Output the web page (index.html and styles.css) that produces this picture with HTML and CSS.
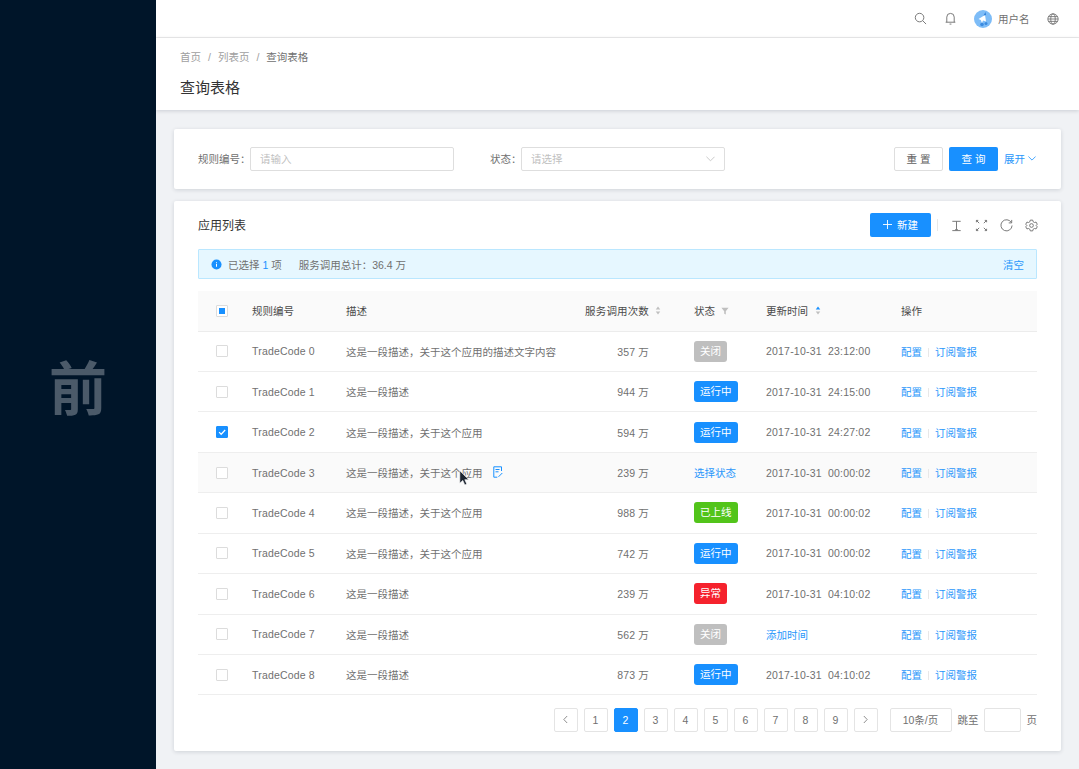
FILE: index.html
```html
<!DOCTYPE html>
<html lang="zh-CN">
<head>
<meta charset="utf-8">
<title>查询表格</title>
<link rel="stylesheet" href="styles.css">
</head>
<body>
<div class="app">
  <aside class="sidebar"><span class="side-char">前</span></aside>
  <div class="main">
    <header class="topbar">
      <svg class="ico top-search" viewBox="0 0 14 14"><circle cx="6" cy="6" r="4.6"/><path d="M9.4 9.4 13 13"/></svg>
      <svg class="ico top-bell" viewBox="0 0 14 14"><path d="M3 11V5.500a4 4 0 0 1 8 0V11M1.800 11h10.400M6 13h2"/></svg>
      <span class="avatar"><svg viewBox="0 0 18 18"><circle cx="9" cy="9" r="9" fill="#7dbcf7"/><path d="M4.500 9l6.500-4 1 6.500-3-1-1 2.500-1.200-3z" fill="#fff"/><path d="M11.500 2 9.500 5.500 12 5z" fill="#2f7fd8"/><circle cx="8" cy="14.500" r="1.800" fill="#3b8be0"/><circle cx="12" cy="13.500" r="1.500" fill="#3b8be0"/></svg></span>
      <span class="user">用户名</span>
      <svg class="ico top-globe" viewBox="0 0 14 14"><circle cx="7" cy="7" r="6"/><ellipse cx="7" cy="7" rx="2.600" ry="6"/><path d="M1 7h12M1.800 4.200h10.400M1.800 9.800h10.400"/></svg>
    </header>

    <section class="pagehead">
      <nav class="crumbs"><span>首页</span><i>/</i><span>列表页</span><i>/</i><span class="crumb-now">查询表格</span></nav>
      <h1 class="title">查询表格</h1>
    </section>

    <div class="content">
      <section class="card filter">
        <label class="f-label">规则编号：</label>
        <div class="field field-a">请输入</div>
        <label class="f-label f-label-b">状态：</label>
        <div class="field field-b">请选择
          <svg class="chev" viewBox="0 0 10 6"><path d="M.5.5 5 5 9.500.5"/></svg>
        </div>
        <span class="btn btn-ghost btn-reset">重 置</span>
        <span class="btn btn-primary btn-query">查 询</span>
        <span class="expand">展开<svg class="chev-blue" viewBox="0 0 10 6"><path d="M.5.5 5 5 9.500.5"/></svg></span>
      </section>

      <section class="card listing">
        <div class="toolbar">
          <h2 class="list-title">应用列表</h2>
          <span class="btn btn-primary btn-new"><svg class="plus" viewBox="0 0 10 10"><path d="M5 0v10M0 5h10"/></svg>新建</span>
          <span class="tool-div"></span>
          <svg class="ico tool" viewBox="0 0 14 14"><path d="M2.500 2.500h9M7 2.500v9M2.500 12.500h9M5.500 11.500h3"/></svg>
          <svg class="ico tool" viewBox="0 0 14 14"><path d="M1.500 1.500l3 3M12.500 1.500l-3 3M1.500 12.500l3-3M12.500 12.500l-3-3M1.500 1.500h2M1.500 1.500v2M12.500 1.500h-2M12.500 1.500v2M1.500 12.500h2M1.500 12.500v-2M12.500 12.500h-2M12.500 12.500v-2"/></svg>
          <svg class="ico tool" viewBox="0 0 14 14"><path d="M12.200 3.800A6 6 0 1 0 13 7M12.600 1v3.200H9.400"/></svg>
          <svg class="ico tool" viewBox="0 0 14 14"><path d="M5.700 1.200h2.600l.4 1.700 1.500.9 1.700-.5 1.300 2.300L12 7l1.200 1.400-1.300 2.300-1.700-.5-1.500.9-.4 1.700H5.700l-.4-1.700-1.500-.9-1.700.5L.8 8.400 2 7 .8 5.600l1.300-2.300 1.700.5 1.500-.9z"/><circle cx="7" cy="7" r="2"/></svg>
        </div>

        <div class="alert">
          <svg class="info" viewBox="0 0 12 12"><circle cx="6" cy="6" r="5.500" fill="#1890ff"/><path d="M6 5.200v3.300M6 3.200v1" stroke="#fff" stroke-width="1.100"/></svg>
          <span>已选择 <b class="alert-num">1</b> 项</span>
          <span class="alert-sum">服务调用总计：36.4 万</span>
          <a class="link alert-clear">清空</a>
        </div>

        <div class="table">
          <div class="row head">
            <div><span class="cb cb-part"></span></div>
            <div>规则编号</div>
            <div>描述</div>
            <div class="num">服务调用次数</div>
            <div><svg class="sort" viewBox="0 0 6 10"><path d="M3 .5 5.500 4H.5z" fill="#bfbfbf"/><path d="M3 9.500.5 6h5z" fill="#bfbfbf"/></svg></div>
            <div class="status-head">状态<svg class="filter-ico" viewBox="0 0 10 10"><path d="M.5 1h9L6 5.200V9.500L4 8.500V5.200z" fill="#bfbfbf"/></svg></div>
            <div class="status-head">更新时间<svg class="sort sort-time" viewBox="0 0 6 10"><path d="M3 .5 5.500 4H.5z" fill="#1890ff"/><path d="M3 9.500.5 6h5z" fill="#bfbfbf"/></svg></div>
            <div>操作</div>
          </div>

          <div class="row">
            <div><span class="cb"></span></div><div class="code">TradeCode 0</div><div>这是一段描述，关于这个应用的描述文字内容</div><div class="num">357 万</div><div></div>
            <div><span class="tag tag-gray">关闭</span></div><div class="time">2017-10-31  23:12:00</div>
            <div><a class="link">配置</a><i class="sep"></i><a class="link">订阅警报</a></div>
          </div>
          <div class="row">
            <div><span class="cb"></span></div><div class="code">TradeCode 1</div><div>这是一段描述</div><div class="num">944 万</div><div></div>
            <div><span class="tag tag-blue">运行中</span></div><div class="time">2017-10-31  24:15:00</div>
            <div><a class="link">配置</a><i class="sep"></i><a class="link">订阅警报</a></div>
          </div>
          <div class="row">
            <div><span class="cb cb-on"><svg viewBox="0 0 12 12"><path d="M2.500 6.200 5 8.700 9.800 3.600"/></svg></span></div><div class="code">TradeCode 2</div><div>这是一段描述，关于这个应用</div><div class="num">594 万</div><div></div>
            <div><span class="tag tag-blue">运行中</span></div><div class="time">2017-10-31  24:27:02</div>
            <div><a class="link">配置</a><i class="sep"></i><a class="link">订阅警报</a></div>
          </div>
          <div class="row row-hover">
            <div><span class="cb"></span></div><div class="code">TradeCode 3</div>
            <div class="desc-edit">这是一段描述，关于这个应用
              <svg class="edit" viewBox="0 0 10 12"><path d="M8.500 5V.8H.8v10.400h3.500M2.500 3.500h4M2.500 5.800h3M5.500 10.800 9.300 7"/></svg>
              <svg class="cursor" viewBox="0 0 11 16"><path d="M.8.8v12.400l3-2.800 2 4.600 2-.9-2-4.400h4z" fill="#1c2430" stroke="#fff" stroke-width=".6"/></svg>
            </div>
            <div class="num">239 万</div><div></div>
            <div><a class="link">选择状态</a></div><div class="time">2017-10-31  00:00:02</div>
            <div><a class="link">配置</a><i class="sep"></i><a class="link">订阅警报</a></div>
          </div>
          <div class="row">
            <div><span class="cb"></span></div><div class="code">TradeCode 4</div><div>这是一段描述，关于这个应用</div><div class="num">988 万</div><div></div>
            <div><span class="tag tag-green">已上线</span></div><div class="time">2017-10-31  00:00:02</div>
            <div><a class="link">配置</a><i class="sep"></i><a class="link">订阅警报</a></div>
          </div>
          <div class="row">
            <div><span class="cb"></span></div><div class="code">TradeCode 5</div><div>这是一段描述，关于这个应用</div><div class="num">742 万</div><div></div>
            <div><span class="tag tag-blue">运行中</span></div><div class="time">2017-10-31  00:00:02</div>
            <div><a class="link">配置</a><i class="sep"></i><a class="link">订阅警报</a></div>
          </div>
          <div class="row">
            <div><span class="cb"></span></div><div class="code">TradeCode 6</div><div>这是一段描述</div><div class="num">239 万</div><div></div>
            <div><span class="tag tag-red">异常</span></div><div class="time">2017-10-31  04:10:02</div>
            <div><a class="link">配置</a><i class="sep"></i><a class="link">订阅警报</a></div>
          </div>
          <div class="row">
            <div><span class="cb"></span></div><div class="code">TradeCode 7</div><div>这是一段描述</div><div class="num">562 万</div><div></div>
            <div><span class="tag tag-gray">关闭</span></div><div><a class="link">添加时间</a></div>
            <div><a class="link">配置</a><i class="sep"></i><a class="link">订阅警报</a></div>
          </div>
          <div class="row">
            <div><span class="cb"></span></div><div class="code">TradeCode 8</div><div>这是一段描述</div><div class="num">873 万</div><div></div>
            <div><span class="tag tag-blue">运行中</span></div><div class="time">2017-10-31  04:10:02</div>
            <div><a class="link">配置</a><i class="sep"></i><a class="link">订阅警报</a></div>
          </div>
        </div>

        <div class="pager">
          <span class="pg"><svg class="pg-arrow" viewBox="0 0 6 10"><path d="M5 .8 1 5l4 4.200"/></svg></span>
          <span class="pg">1</span>
          <span class="pg pg-on">2</span>
          <span class="pg">3</span>
          <span class="pg">4</span>
          <span class="pg">5</span>
          <span class="pg">6</span>
          <span class="pg">7</span>
          <span class="pg">8</span>
          <span class="pg">9</span>
          <span class="pg"><svg class="pg-arrow" viewBox="0 0 6 10"><path d="M1 .8 5 5l-4 4.200"/></svg></span>
          <span class="pg pg-size">10条/页</span>
          <span class="pg-text pg-text-jump">跳至</span>
          <span class="pg pg-jump"></span>
          <span class="pg-text">页</span>
        </div>
      </section>
    </div>
  </div>
</div>
</body>
</html>
```

FILE: styles.css
```css
* { box-sizing: border-box; }
html, body { margin: 0; height: 100%; overflow: hidden; }
body {
  font-family: "Liberation Sans", "Noto Sans CJK SC", sans-serif;
  font-size: 10.5px;
  color: #707070;
  background: #f0f2f5;
}
.app { display: flex; height: 769px; }
.sidebar {
  flex: 0 0 156px;
  background: #001529;
  display: flex;
  align-items: center;
  justify-content: center;
  padding-top: 1px;
}
.side-char {
  font-family: "Noto Sans CJK SC", sans-serif;
  font-size: 58px;
  font-weight: 700;
  color: #4b5a69;
  line-height: 1;
}
.main { flex: 1; min-width: 0; display: flex; flex-direction: column; }

.topbar {
  height: 38px;
  background: #fff;
  border-bottom: 1px solid #ececec;
  display: flex;
  align-items: center;
  padding-right: 20px;
  justify-content: flex-end;
  flex: none;
}
.ico { fill: none; stroke: #707070; stroke-width: 1; width: 13px; height: 13px; display: block; }
.top-search { margin-right: 17px; }
.top-bell { margin-right: 17px; }
.avatar { width: 18px; height: 18px; margin-right: 6px; }
.avatar svg { width: 18px; height: 18px; display: block; }
.user { width: 32px; margin-right: 17px; white-space: nowrap; }
.top-globe { width: 12px; height: 12px; }

.pagehead {
  height: 72px;
  background: #fff;
  padding: 12px 24px 0;
  box-shadow: 0 1px 4px rgba(0, 21, 41, .16);
  flex: none;
  position: relative;
}
.crumbs { display: flex; color: #a0a0a0; line-height: 14px; }
.crumbs i { font-style: normal; margin: 0 7px; }
.crumb-now { color: #707070; }
.title { margin: 14px 0 0; font-size: 15px; font-weight: 400; line-height: 20px; color: #333; }

.content { flex: 1; padding: 19px 18px 0; min-height: 0; }
.card { background: #fff; box-shadow: 0 1px 4px rgba(0, 21, 41, .14); border-radius: 2px; }

.filter {
  height: 60px;
  padding: 0 24px;
  display: flex;
  align-items: center;
  margin-bottom: 12px;
}
.f-label { white-space: nowrap; width: 52px; padding-bottom: 2px; }
.f-label-b { width: 31px; margin-left: 36px; }
.field {
  height: 24px;
  width: 204px;
  border: 1px solid #dedede;
  border-radius: 2px;
  color: #bfbfbf;
  display: flex;
  align-items: center;
  justify-content: space-between;
  padding: 0 9px 1px;
}
.chev { width: 9px; height: 6px; fill: none; stroke: #c4c4c4; stroke-width: 1; }
.btn {
  height: 24px;
  display: flex;
  align-items: center;
  justify-content: center;
  border-radius: 2px;
  white-space: pre;
  padding-bottom: 1px;
}
.btn-ghost { border: 1px solid #dedede; color: #606060; width: 49px; margin-left: 169px; }
.btn-primary { background: #1890ff; color: #fff; }
.btn-query { width: 49px; margin-left: 6px; }
.expand { color: #2a97fb; margin-left: 6px; display: flex; align-items: center; white-space: nowrap; padding-bottom: 1px; }
.chev-blue { width: 8px; height: 5px; margin-left: 3px; fill: none; stroke: #1890ff; stroke-width: 1; }

.listing { height: 550px; padding: 12px 24px 0; }
.toolbar { display: flex; align-items: center; height: 24px; }
.list-title { margin: 0; flex: 1; font-size: 12px; font-weight: 400; color: #333; padding-bottom: 1px; }
.btn-new { width: 61px; }
.plus { width: 9px; height: 9px; margin-right: 5px; stroke: #fff; stroke-width: 1; fill: none; }
.tool-div { width: 1px; height: 12px; background: #e8e8e8; margin: 0 12px 0 6px; }
.tool { width: 13px; height: 13px; margin-right: 12px; }
.tool:last-child { margin-right: -1px; }

.alert {
  height: 30px;
  margin-top: 12px;
  background: #e6f7ff;
  border: 1px solid #bae7ff;
  border-radius: 1px;
  display: flex;
  align-items: center;
  padding: 0 12px;
}
.info { width: 11px; height: 11px; margin-right: 6px; flex: none; }
.alert-num { font-weight: 400; color: #1890ff; }
.alert-sum { margin-left: 17px; }
.alert-clear { margin-left: auto; }
.link { color: #2a97fb; }

.table { margin-top: 12px; }
.row {
  display: grid;
  grid-template-columns: 54px 94px 224px 79px 45px 72px 135px 136px;
  height: 40.44px;
  align-items: center;
  border-bottom: 1px solid #eee;
  background: #fff;
}
.row > div:first-child { padding-left: 18px; display: flex; }
.head { height: 40.5px; background: #fafafa; color: #4a4a4a; border-bottom: 1px solid #ececec; }
.row-hover { background: #fafafa; }
.num { text-align: right; white-space: nowrap; letter-spacing: .15px; }
.code { letter-spacing: .18px; white-space: nowrap; }
.time { white-space: pre; letter-spacing: .2px; }
.desc-edit { position: relative; white-space: nowrap; }
.status-head { display: flex; align-items: center; white-space: nowrap; }
.sort { width: 6px; height: 9px; display: block; margin-left: 6px; }
.sort-time { margin-left: 7px; }
.filter-ico { width: 8px; height: 8px; margin-left: 6px; }
.edit { position: absolute; left: 147px; top: 1px; width: 10px; height: 12px; fill: none; stroke: #1890ff; stroke-width: 1; }
.cursor { position: absolute; left: 113px; top: 5px; width: 11px; height: 16px; }

.cb {
  width: 12px;
  height: 12px;
  border: 1px solid #dcdcdc;
  border-radius: 1px;
  background: #fff;
  display: flex;
  align-items: center;
  justify-content: center;
}
.cb-part::after { content: ""; width: 6px; height: 6px; background: #1890ff; }
.cb-on { background: #1890ff; border-color: #1890ff; }
.cb-on svg { width: 10px; height: 10px; fill: none; stroke: #fff; stroke-width: 1.500; }

.tag {
  display: inline-block;
  height: 21px;
  line-height: 21px;
  padding: 0 6px;
  border-radius: 3px;
  color: #fff;
  white-space: nowrap;
}
.tag-gray { background: #bfbfbf; }
.tag-blue { background: #1890ff; }
.tag-green { background: #52c41a; }
.tag-red { background: #f5222d; }
.sep { display: inline-block; width: 1px; height: 9px; background: #e8e8e8; margin: 0 6px; vertical-align: -1px; }

.pager { display: flex; justify-content: flex-end; align-items: center; margin-top: 12.5px; }
.pg {
  width: 24px;
  height: 24px;
  margin-right: 6px;
  border: 1px solid #e4e4e4;
  border-radius: 2px;
  display: flex;
  align-items: center;
  justify-content: center;
  background: #fff;
}
.pg-on { background: #1890ff; border-color: #1890ff; color: #fff; }
.pg-arrow { width: 5px; height: 9px; fill: none; stroke: #777; stroke-width: 1; }
.pg-size { width: 62px; margin-left: 6px; margin-right: 6px; }
.pg-jump { width: 37px; }
.pg-text { white-space: nowrap; margin-right: 6px; }
.pg-text-jump { margin-right: 5px; }
.pg-text:last-child { margin-right: 0; }
```
